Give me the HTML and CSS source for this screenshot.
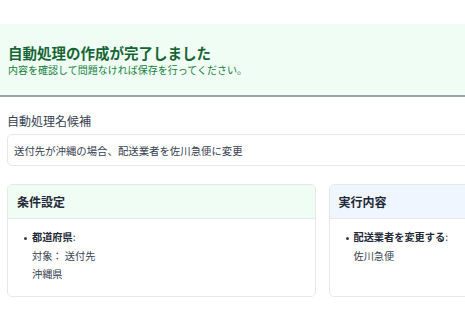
FILE: index.html
```html
<!DOCTYPE html>
<html lang="ja">
<head>
    <meta charset="UTF-8">
    <meta name="viewport" content="width=device-width, initial-scale=1.0">
    <title>自動処理</title>
    <link rel="stylesheet" href="styles.css">
</head>
<body>
    <div class="page">
        <div class="done-banner">
            <h1>自動処理の作成が完了しました</h1>
            <p>内容を確認して問題なければ保存を行ってください。</p>
        </div>

        <div class="content">
            <div class="field">
                <label for="ruleName">自動処理名候補</label>
                <input type="text" id="ruleName" value="送付先が沖縄の場合、配送業者を佐川急便に変更">
            </div>

            <div class="cards">
                <div class="card">
                    <div class="card-header condition">条件設定</div>
                    <ul class="card-body">
                        <li><strong>都道府県</strong>:
                            <div>対象： 送付先</div>
                            <div>沖縄県</div>
                        </li>
                    </ul>
                </div>
                <div class="card">
                    <div class="card-header action">実行内容</div>
                    <ul class="card-body">
                        <li><strong>配送業者を変更する</strong>:
                            <div>佐川急便</div>
                        </li>
                    </ul>
                </div>
            </div>
        </div>
    </div>
</body>
</html>
```

FILE: styles.css
```css
* {
    margin: 0;
    padding: 0;
    box-sizing: border-box;
}

body {
    background-color: #fff;
    color: #374151;
    font-family: "Noto Sans CJK JP", "Noto Sans", sans-serif;
    overflow: hidden;
}

.page {
    width: 644px;
    padding-top: 24px;
}

.done-banner {
    background-color: #f0fdf4;
    border-bottom: 2px solid #9ca3af;
    padding: 18px 8px 20px;
}

.done-banner h1 {
    font-size: 14.5px;
    line-height: 22px;
    font-weight: 700;
    color: #166534;
}

.done-banner p {
    font-size: 10px;
    line-height: 11px;
    color: #15803d;
}

.content {
    padding: 16px 7px 0;
}

.field label {
    display: block;
    font-size: 12px;
    line-height: 16px;
    margin-bottom: 5px;
}

.field input[type="text"] {
    width: 100%;
    height: 32px;
    padding: 0 6px;
    font-family: inherit;
    font-size: 10.4px;
    color: #374151;
    border: 1px solid #e5e7eb;
    border-radius: 5px;
    background: #fff;
}

.cards {
    display: grid;
    grid-template-columns: 1fr 1fr;
    gap: 13px;
    margin-top: 18px;
}

.card {
    border: 1px solid #e5e7eb;
    border-radius: 5px;
    overflow: hidden;
    height: 113px;
}

.card-header {
    height: 34px;
    padding: 0 9px;
    display: flex;
    align-items: center;
    font-size: 12px;
    font-weight: 700;
    color: #1f2937;
    border-bottom: 1px solid #e5e7eb;
}

.card-header.condition {
    background-color: #f0fdf4;
}

.card-header.action {
    background-color: #eff6ff;
}

.card-body {
    list-style: none;
    padding: 9px 0 0 24px;
    font-size: 10.2px;
    line-height: 18.5px;
    color: #374151;
}

/* small dot bullet, sits 8px left of the text */
.card-body li::before {
    content: "";
    display: inline-block;
    width: 3px;
    height: 3px;
    border-radius: 50%;
    background-color: #374151;
    margin-left: -8px;
    margin-right: 5px;
    vertical-align: middle;
}

.card-body strong {
    color: #1f2937;
}
```
